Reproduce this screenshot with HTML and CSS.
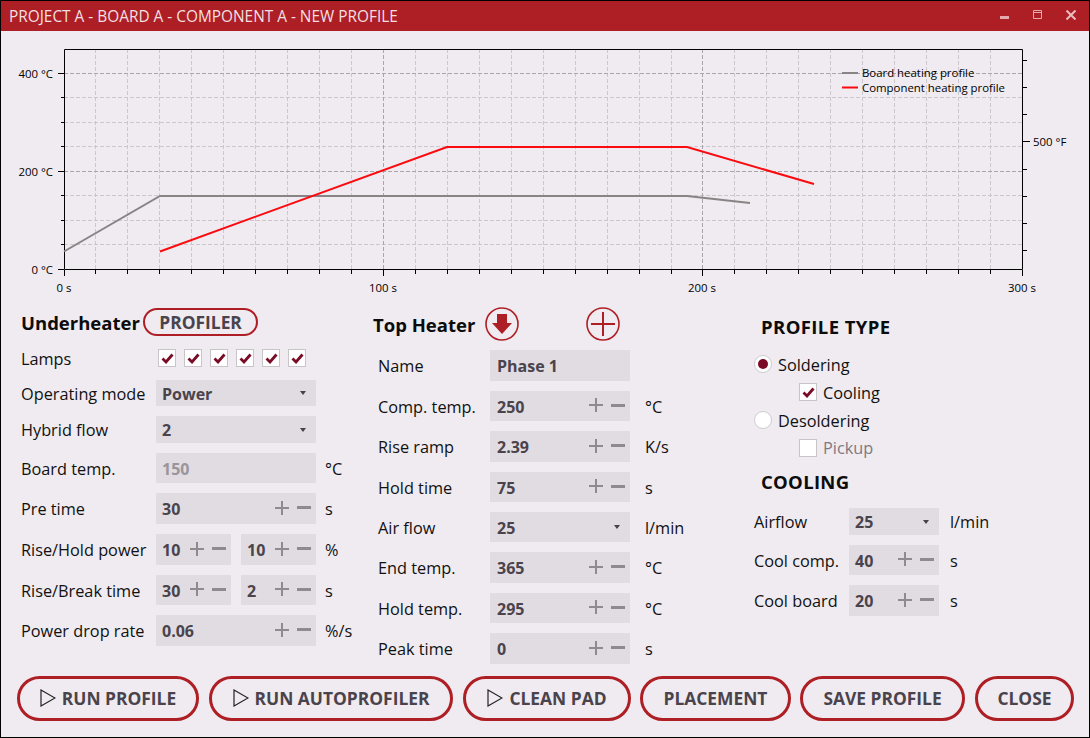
FILE: index.html
```html
<!DOCTYPE html>
<html lang="en">
<head>
<meta charset="utf-8">
<title>New Profile</title>
<link rel="stylesheet" href="styles.css">
</head>
<body>
<div class="window">
  <header class="titlebar">
    <span class="title">PROJECT A - BOARD A - COMPONENT A - NEW PROFILE</span>
    <div class="winctl">
      <svg width="10" height="10" viewBox="0 0 10 10"><rect x="0" y="6" width="9" height="3" fill="#e3a9ad"/></svg>
      <svg width="10" height="10" viewBox="0 0 10 10"><path d="M.5.5h8v8h-8zM.5 2.5h8" fill="none" stroke="#e3a9ad"/></svg>
      <svg width="10" height="10" viewBox="0 0 10 10"><path d="M.5.5l9 9M9.5.5l-9 9" fill="none" stroke="#e9bcc0" stroke-width="2"/></svg>
    </div>
  </header>

  <svg class="chart" width="1088" height="275" viewBox="1 31 1088 275">
    <path class="grid" d="M95.5 49V269M127.5 49V269M159.5 49V269M191.5 49V269M223.5 49V269M255.5 49V269M287.5 49V269M319.5 49V269M351.5 49V269M415.5 49V269M447.5 49V269M479.5 49V269M511.5 49V269M543.5 49V269M575.5 49V269M607.5 49V269M639.5 49V269M671.5 49V269M734.5 49V269M766.5 49V269M798.5 49V269M830.5 49V269M862.5 49V269M894.5 49V269M926.5 49V269M958.5 49V269M990.5 49V269"/>
    <path class="grid" d="M64 97.500H1022M64 122.500H1022M64 146.500H1022M64 195.500H1022M64 220.500H1022M64 244.500H1022"/>
    <path class="grid major" d="M383.500 49V269M702.500 49V269M64 73.500H1022M64 171.500H1022"/>
    <path class="axis" d="M64.500 49.500H1022.500V269.500H64.500Z"/>
    <path class="axis" d="M58 73.500H64M61 97.500H64M61 122.500H64M61 146.500H64M58 171.500H64M61 195.500H64M61 220.500H64M61 244.500H64M58 269.500H64"/>
    <path class="axis" d="M64.500 270V276M95.500 270V274M127.500 270V274M159.500 270V274M191.500 270V274M223.500 270V274M255.500 270V274M287.500 270V274M319.500 270V274M351.500 270V274M383.500 270V276M415.500 270V274M447.500 270V274M479.500 270V274M511.500 270V274M543.500 270V274M575.500 270V274M607.500 270V274M639.500 270V274M671.500 270V274M702.500 270V276M734.500 270V274M766.500 270V274M798.500 270V274M830.500 270V274M862.500 270V274M894.500 270V274M926.500 270V274M958.500 270V274M990.500 270V274M1022.500 270V276"/>
    <path class="axis" d="M1023 60.500H1027M1023 87.500H1027M1023 114.500H1027M1023 141.500H1030M1023 169.500H1027M1023 196.500H1027M1023 223.500H1027M1023 250.500H1027"/>
    <polyline class="line board" points="64,251.500 160,196 687,196 750,203"/>
    <polyline class="line comp" points="160,251.500 447,147 687,147 814,184"/>
    <text class="tick end" x="53" y="78">400 °C</text>
    <text class="tick end" x="53" y="176">200 °C</text>
    <text class="tick end" x="53" y="274">0 °C</text>
    <text class="tick mid" x="64" y="292">0 s</text>
    <text class="tick mid" x="383" y="292">100 s</text>
    <text class="tick mid" x="702" y="292">200 s</text>
    <text class="tick mid" x="1022" y="292">300 s</text>
    <text class="tick" x="1033" y="146">500 °F</text>
    <line class="line board" x1="842" y1="73" x2="858" y2="73"/>
    <line class="line comp" x1="842" y1="87.500" x2="858" y2="87.500"/>
    <text class="tick" x="862" y="77">Board heating profile</text>
    <text class="tick" x="862" y="92">Component heating profile</text>
  </svg>

  <main class="panels">
    <section class="col col-under">
      <div class="row h30 head-row">
        <h2 class="heading">Underheater</h2>
        <button class="pill-small">PROFILER</button>
      </div>
      <div class="row h24">
        <span class="label">Lamps</span>
        <div class="lamps">
          <span class="check on"><svg width="13" height="11" viewBox="0 0 13 11"><path d="M1.500 5.500l3.500 3.500 6.500-7.500"/></svg></span>
          <span class="check on"><svg width="13" height="11" viewBox="0 0 13 11"><path d="M1.500 5.500l3.500 3.500 6.500-7.500"/></svg></span>
          <span class="check on"><svg width="13" height="11" viewBox="0 0 13 11"><path d="M1.500 5.500l3.500 3.500 6.500-7.500"/></svg></span>
          <span class="check on"><svg width="13" height="11" viewBox="0 0 13 11"><path d="M1.500 5.500l3.500 3.500 6.500-7.500"/></svg></span>
          <span class="check on"><svg width="13" height="11" viewBox="0 0 13 11"><path d="M1.500 5.500l3.500 3.500 6.500-7.500"/></svg></span>
          <span class="check on"><svg width="13" height="11" viewBox="0 0 13 11"><path d="M1.500 5.500l3.500 3.500 6.500-7.500"/></svg></span>
        </div>
      </div>
      <div class="row h26"><span class="label">Operating mode</span><div class="field w160"><span class="val">Power</span><i class="caret"></i></div></div>
      <div class="row h27"><span class="label">Hybrid flow</span><div class="field w160"><span class="val">2</span><i class="caret"></i></div></div>
      <div class="row h30"><span class="label">Board temp.</span><div class="field w160"><span class="val off">150</span></div><span class="unit">°C</span></div>
      <div class="row h31"><span class="label">Pre time</span><div class="field w160"><span class="val">30</span><i class="plus"></i><i class="minus"></i></div><span class="unit">s</span></div>
      <div class="row h31"><span class="label">Rise/Hold power</span><div class="split"><div class="field w75"><span class="val">10</span><i class="plus"></i><i class="minus"></i></div><div class="field w75"><span class="val">10</span><i class="plus"></i><i class="minus"></i></div></div><span class="unit">%</span></div>
      <div class="row h30"><span class="label">Rise/Break time</span><div class="split"><div class="field w75"><span class="val">30</span><i class="plus"></i><i class="minus"></i></div><div class="field w75"><span class="val">2</span><i class="plus"></i><i class="minus"></i></div></div><span class="unit">s</span></div>
      <div class="row h31"><span class="label">Power drop rate</span><div class="field w160"><span class="val">0.06</span><i class="plus"></i><i class="minus"></i></div><span class="unit">%/s</span></div>
    </section>

    <section class="col col-top">
      <div class="row top-head">
        <h2 class="heading top-title">Top Heater</h2>
        <svg class="round first" width="34" height="34" viewBox="0 0 34 34"><circle cx="17" cy="17" r="16" fill="none" stroke="#ae1f25" stroke-width="1.600"/><path d="M12 7h10v9h5L17 27 7 16h5z" fill="#ae1f25"/></svg>
        <svg class="round second" width="34" height="34" viewBox="0 0 34 34"><circle cx="17" cy="17" r="16" fill="none" stroke="#ae1f25" stroke-width="1.600"/><path d="M17 5v24M5 17h24" fill="none" stroke="#ae1f25" stroke-width="2"/></svg>
      </div>
      <div class="row h31"><span class="label">Name</span><div class="field w140"><span class="val">Phase 1</span></div></div>
      <div class="row h30"><span class="label">Comp. temp.</span><div class="field w140"><span class="val">250</span><i class="plus"></i><i class="minus"></i></div><span class="unit">°C</span></div>
      <div class="row h31"><span class="label">Rise ramp</span><div class="field w140"><span class="val">2.39</span><i class="plus"></i><i class="minus"></i></div><span class="unit">K/s</span></div>
      <div class="row h30"><span class="label">Hold time</span><div class="field w140"><span class="val">75</span><i class="plus"></i><i class="minus"></i></div><span class="unit">s</span></div>
      <div class="row h30"><span class="label">Air flow</span><div class="field w140"><span class="val">25</span><i class="caret"></i></div><span class="unit">l/min</span></div>
      <div class="row h31"><span class="label">End temp.</span><div class="field w140"><span class="val">365</span><i class="plus"></i><i class="minus"></i></div><span class="unit">°C</span></div>
      <div class="row h30"><span class="label">Hold temp.</span><div class="field w140"><span class="val">295</span><i class="plus"></i><i class="minus"></i></div><span class="unit">°C</span></div>
      <div class="row h31"><span class="label">Peak time</span><div class="field w140"><span class="val">0</span><i class="plus"></i><i class="minus"></i></div><span class="unit">s</span></div>
    </section>

    <section class="col col-type">
      <h2 class="heading type-title">PROFILE TYPE</h2>
      <div class="opt"><span class="radio on"></span><span class="label">Soldering</span></div>
      <div class="opt sub"><span class="check on"><svg width="13" height="11" viewBox="0 0 13 11"><path d="M1.500 5.500l3.500 3.500 6.500-7.500"/></svg></span><span class="label">Cooling</span></div>
      <div class="opt"><span class="radio"></span><span class="label">Desoldering</span></div>
      <div class="opt sub last"><span class="check"></span><span class="label dim">Pickup</span></div>
      <h2 class="heading cool-title">COOLING</h2>
      <div class="stack">
        <div class="row h27"><span class="label">Airflow</span><div class="field w90"><span class="val">25</span><i class="caret"></i></div><span class="unit">l/min</span></div>
        <div class="row h30"><span class="label">Cool comp.</span><div class="field w90"><span class="val">40</span><i class="plus"></i><i class="minus"></i></div><span class="unit">s</span></div>
        <div class="row h31"><span class="label">Cool board</span><div class="field w90"><span class="val">20</span><i class="plus"></i><i class="minus"></i></div><span class="unit">s</span></div>
      </div>
    </section>
  </main>

  <footer class="actions">
    <button class="pill b1"><svg width="16" height="18" viewBox="0 0 16 18"><path d="M1 1l14 8-14 8z"/></svg>RUN PROFILE</button>
    <button class="pill b2"><svg width="16" height="18" viewBox="0 0 16 18"><path d="M1 1l14 8-14 8z"/></svg>RUN AUTOPROFILER</button>
    <button class="pill b3"><svg width="16" height="18" viewBox="0 0 16 18"><path d="M1 1l14 8-14 8z"/></svg>CLEAN PAD</button>
    <button class="pill b4">PLACEMENT</button>
    <button class="pill b5">SAVE PROFILE</button>
    <button class="pill b6">CLOSE</button>
  </footer>
</div>
</body>
</html>
```

FILE: styles.css
```css
* { box-sizing: border-box; }
html, body { margin: 0; padding: 0; }
body { font-family: "Open Sans", "Noto Sans", sans-serif; font-size: 16.300px; color: #111; background: #efebf0; }

.window {
  width: 1090px; height: 738px; border: 1px solid #000;
  background: #efebf0; display: flex; flex-direction: column; overflow: hidden;
}

.titlebar {
  height: 30px; flex: none; background: #ae1f25; color: #f2dfe1;
  display: flex; align-items: center; justify-content: space-between; padding: 0 0 0 8px;
}
.title { font-size: 15.400px; }
.winctl { display: flex; gap: 23px; padding-right: 13px; align-items: center; margin-top: -2px; }
.winctl svg { display: block; }

.chart { display: block; flex: none; }
.chart .grid { fill: none; stroke: #cbc7cc; stroke-width: 1; stroke-dasharray: 4 2; }
.chart .major { stroke: #a9a5aa; }
.chart .axis { fill: none; stroke: #000; stroke-width: 1; }
.chart .line { fill: none; stroke-width: 2; }
.chart .board { stroke: #888486; }
.chart .comp { stroke: #fb0a0f; }
.chart .tick { font-family: "Open Sans", sans-serif; font-size: 11.400px; fill: #000; }
.chart .end { text-anchor: end; }
.chart .mid { text-anchor: middle; }

.panels { display: flex; flex: none; height: 368px; }
.col { display: flex; flex-direction: column; gap: 10px; flex: none; }
.col-under { width: 352px; padding-left: 20px; }
.col-top { width: 401px; padding-left: 20px; }
.col-type { gap: 0; }

.row { display: flex; align-items: center; flex: none; }
.h24 { height: 24px; }
.h26 { height: 26px; }
.h27 { height: 27px; }
.h30 { height: 30px; }
.h31 { height: 31px; }

.heading { margin: 0; font-size: 18.500px; font-weight: 700; color: #0c0c0c; }
.head-row { align-items: flex-end; gap: 3px; }
.head-row .heading { line-height: 26px; padding-top: 1px; }

.pill-small {
  width: 115.500px; height: 28px; border: 2px solid #ae1f25; border-radius: 14px; background: transparent;
  font: 700 17.400px "Open Sans", sans-serif; color: #4a434c; padding: 0 0 2px;
}

.label { color: #111; white-space: nowrap; padding-top: 1px; }
.col-under .label { width: 135px; flex: none; }
.col-top .label { width: 117px; flex: none; padding-left: 5px; }
.stack .label { width: 95px; flex: none; }

.field { position: relative; height: 100%; background: #e0dce1; display: flex; align-items: center; flex: none; }
.w160 { width: 160px; }
.w140 { width: 140px; }
.w90 { width: 90px; }
.w75 { width: 75px; }
.split { display: flex; gap: 10px; height: 100%; flex: none; }
.val { font-weight: 700; font-size: 16px; color: #4a434c; padding: 1px 0 0 6px; }
.col-top .val { padding-left: 7px; }
.val.off { color: #9a959b; }
.unit { margin-left: 9px; color: #111; white-space: nowrap; padding-top: 1px; }
.col-top .unit { margin-left: 15px; }
.stack .unit { margin-left: 11px; }

.plus, .minus { position: absolute; top: 50%; margin-top: -8px; width: 14px; height: 14px; }
.plus {
  right: 27px;
  background:
    linear-gradient(#8d8b8e, #8d8b8e) center / 14px 2px no-repeat,
    linear-gradient(#8d8b8e, #8d8b8e) center / 2px 14px no-repeat;
}
.minus { right: 5px; background: linear-gradient(#8d8b8e, #8d8b8e) center / 14px 3px no-repeat; }
.caret {
  position: absolute; right: 10px; top: 50%; margin-top: -2px;
  border-left: 3px solid transparent; border-right: 3px solid transparent; border-top: 4px solid #444;
}

.lamps { display: flex; gap: 8px; margin-left: 2px; }
.check {
  width: 18px; height: 18px; flex: none; background: #fff; border: 1px solid #c8c5c9;
  display: flex; align-items: center; justify-content: center;
}
.check svg { display: block; }
.check path { fill: none; stroke: #7a0a25; stroke-width: 2.800; }

.top-head { height: 34px; margin-top: 1px; margin-bottom: -1px; position: relative; }
.top-title { margin-top: 1px; }
.round.first { margin-left: 10px; }
.round.second { margin-left: 67px; }
.round { display: block; flex: none; }

.type-title { padding: 9px 0 0 7px; height: 44px; line-height: 23px; letter-spacing: 0.400px; }
.opt { height: 28px; display: flex; align-items: center; gap: 6px; }
.opt.sub { padding-left: 45px; }
.opt.last { height: 27px; }
.radio {
  width: 18px; height: 18px; flex: none; border-radius: 50%; background: #fff; border: 1px solid #cfccd0; position: relative;
}
.radio.on::after {
  content: ""; position: absolute; left: 3px; top: 3px; width: 10px; height: 10px; border-radius: 50%; background: #7a0a25;
}
.dim { color: #7f7882; padding-top: 0; }
.cool-title { padding: 9px 0 0 7px; height: 47px; line-height: 23px; letter-spacing: 0.300px; }
.stack { display: flex; flex-direction: column; gap: 10px; }

.actions { display: flex; flex: none; gap: 10px; padding: 0 0 0 16px; margin-top: 2px; }
.pill {
  height: 45px; border: 3px solid #ae1f25; border-radius: 23px; background: transparent; padding: 0 0 1px;
  display: flex; align-items: center; justify-content: center; gap: 6px;
  font: 700 17.400px "Open Sans", sans-serif; color: #4a434c; flex: none;
}
.pill svg { display: block; flex: none; }
.pill path { fill: none; stroke: #222; stroke-width: 1.200; }
.b1 { width: 182px; }
.b2 { width: 244px; }
.b3 { width: 168px; }
.b4 { width: 151px; margin-left: -1px; }
.b5 { width: 165px; margin-left: -1px; }
.b6 { width: 99px; }
```
